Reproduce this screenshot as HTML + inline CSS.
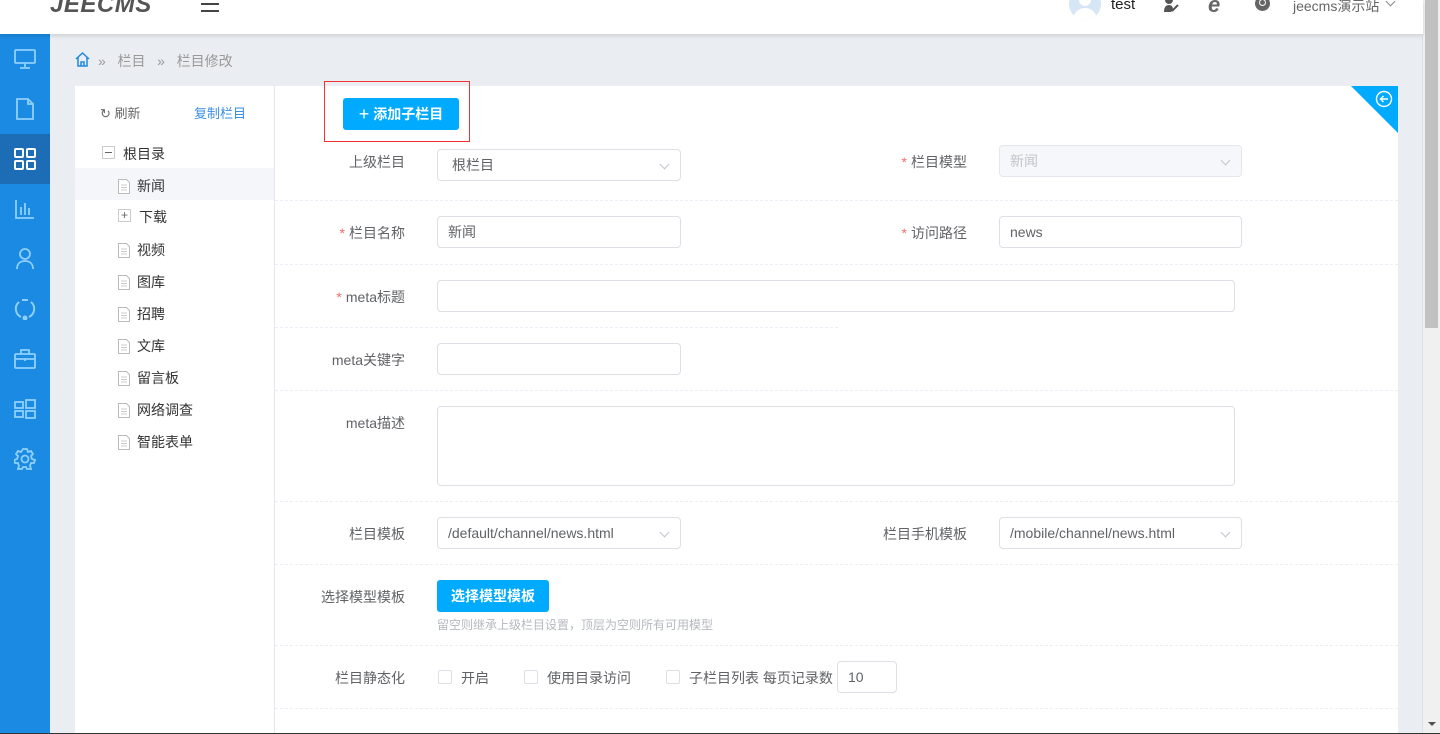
<!DOCTYPE html>
<html><head><meta charset="utf-8"><style>
*{box-sizing:border-box;margin:0;padding:0}
body{width:1440px;height:734px;overflow:hidden;background:#eaedf1;font-family:"Liberation Sans","Noto Sans CJK SC",sans-serif;font-size:14px;color:#606266;position:relative}
.a{position:absolute}
.hdr{left:0;top:0;width:1423px;height:34px;background:#fff;box-shadow:0 2px 4px rgba(0,0,0,.12);z-index:2}
.side{left:0;top:34px;width:50px;height:700px;background:#1a8ae2}
.si{position:absolute;left:0;width:50px;height:50px;display:flex;align-items:center;justify-content:center}
.panel{left:75px;top:86px;width:1323px;height:648px;background:#fff}
.tree{left:75px;top:86px;width:200px;height:648px;border-right:1px solid #e4e7ed}
.lbl{position:absolute;width:130px;left:275px;text-align:right;color:#606266}
.st{color:#f56c6c;margin-right:4px}
.inp{position:absolute;height:32px;border:1px solid #dcdfe6;border-radius:4px;background:#fff;padding-left:10px;line-height:30px;color:#606266}
.sep{position:absolute;left:275px;width:1123px;border-top:1px dashed #ebeef5;height:0}
.arr{position:absolute;right:12px;top:11px;width:7px;height:7px;border-right:1px solid #c0c4cc;border-bottom:1px solid #c0c4cc;transform:rotate(45deg)}
.ti{position:absolute;left:118px;display:flex;align-items:center;color:#333}
.doc{width:12px;height:15px;margin-right:7px}
.cb{position:absolute;width:14px;height:14px;border:1px solid #dcdfe6;border-radius:2px;background:#fff}
</style></head><body>
<svg width="0" height="0" style="position:absolute"><symbol id="d" viewBox="0 0 12 15"><path d="M.5.5h8l3 3v11h-11z" fill="#fff" stroke="#bbb"/><path d="M3 6h6M3 8.5h6M3 11h6" stroke="#ccc"/></symbol></svg>
<div class="a hdr">
 <div class="a" style="left:50px;top:-9px;font-size:24px;font-weight:bold;font-style:italic;color:#555;letter-spacing:0.5px">JEECMS</div>
 <div class="a" style="left:201px;top:3px;width:18px;height:2px;background:#444;box-shadow:0 7px 0 #444"></div>
 <div class="a" style="left:1069px;top:-12px;width:32px;height:32px;border-radius:50%;background:#d6e6f4;overflow:hidden"><div class="a" style="left:10px;top:6px;width:12px;height:12px;border-radius:50%;background:#fff"></div><div class="a" style="left:4px;top:20px;width:24px;height:16px;border-radius:12px 12px 0 0;background:#fff"></div></div>
 <div class="a" style="left:1111px;top:-4px;font-size:15px;color:#222">test</div>
 <svg class="a" style="left:1163px;top:-2px" width="17" height="16"><circle cx="6" cy="2" r="4" fill="#555"/><path d="M1 14c0-5 2-7 5-7s4 2 4 5l-2 2z" fill="#555"/><path d="M9 13l6-6" stroke="#555" stroke-width="2"/></svg>
 <div class="a" style="left:1208px;top:-8px;font-size:22px;font-style:italic;font-weight:bold;color:#666">e</div>
 <div class="a" style="left:1255px;top:-4px;width:15px;height:15px;border-radius:50%;background:#666"><div class="a" style="left:4px;top:3px;width:7px;height:7px;border:1.5px solid #fff;border-radius:50%"></div></div>
 <div class="a" style="left:1293px;top:-4px;font-size:14px;color:#666">jeecms演示站</div>
 <div class="a" style="left:1387px;top:-2px;width:7px;height:7px;border-right:1px solid #888;border-bottom:1px solid #888;transform:rotate(45deg)"></div>
</div>
<div class="a side">
 <div class="si" style="top:0"><svg width="22" height="20" fill="none" stroke="#8fd0ff" stroke-width="1.8"><rect x="1" y="1" width="20" height="13" rx="1"/><path d="M11 14v4M6 19h10"/></svg></div>
 <div class="si" style="top:50px"><svg width="18" height="22" fill="none" stroke="#8fd0ff" stroke-width="1.8"><path d="M1 1h11l5 5v15H1z M12 1v5h5"/></svg></div>
 <div class="si" style="top:100px;background:#1d6db6"><svg width="22" height="22" fill="none" stroke="#fff" stroke-width="2"><rect x="1" y="1" width="8" height="8" rx="1"/><rect x="13" y="1" width="8" height="8" rx="1"/><rect x="1" y="13" width="8" height="8" rx="1"/><rect x="13" y="13" width="8" height="8" rx="1"/></svg></div>
 <div class="si" style="top:150px"><svg width="20" height="20" fill="none" stroke="#8fd0ff" stroke-width="1.8"><path d="M1 1v18h18M6 16V8M10 16V4M14 16V9"/></svg></div>
 <div class="si" style="top:200px"><svg width="18" height="22" fill="none" stroke="#8fd0ff" stroke-width="1.8"><circle cx="9" cy="6" r="5"/><path d="M1 21c0-5 3-8 8-8s8 3 8 8"/></svg></div>
 <div class="si" style="top:250px"><svg width="22" height="22" fill="none" stroke="#8fd0ff" stroke-width="2"><path d="M5 4a9 9 0 0 0 2 15M15 19a9 9 0 0 0 2-15M8 2h6"/><circle cx="11" cy="20" r="1.5" fill="#8fd0ff"/></svg></div>
 <div class="si" style="top:300px"><svg width="22" height="20" fill="none" stroke="#8fd0ff" stroke-width="1.8"><rect x="1" y="5" width="20" height="14" rx="1"/><path d="M7 5V1h8v4M1 10h20M11 9v3"/></svg></div>
 <div class="si" style="top:350px"><svg width="22" height="20" fill="none" stroke="#8fd0ff" stroke-width="1.8"><rect x="1" y="3" width="8" height="6"/><rect x="1" y="12" width="8" height="6"/><rect x="12" y="1" width="9" height="8"/><rect x="12" y="12" width="9" height="7"/></svg></div>
 <div class="si" style="top:400px"><svg width="22" height="22" fill="none" stroke="#8fd0ff" stroke-width="1.8"><circle cx="11" cy="11" r="3.5"/><path d="M9 1h4l1 3 3-1 2 3-2 2 1 3 3 1v0l-1 3-3 0-1 3 1 3-4 0-1-2h-3l-1 2-4 0 1-3-1-3-3 0-1-3 3-1 1-3-2-2 2-3 3 1z"/></svg></div>
</div>
<div class="a" style="left:75px;top:52px"><svg width="15" height="15" fill="none" stroke="#1a8ae2" stroke-width="1.5"><path d="M1 7L7.5 1 14 7M3 5.5V14h9V5.5M6 14v-4h3v4"/></svg></div>
<div class="a" style="left:98px;top:51px;color:#999;font-size:14px">»&nbsp;&nbsp;&nbsp;栏目&nbsp;&nbsp;&nbsp;»&nbsp;&nbsp;&nbsp;栏目修改</div>
<div class="a panel"></div>
<div class="a tree"></div>
<div class="a" style="left:100px;top:103px;color:#666;font-size:13px">↻ 刷新</div>
<div class="a" style="left:194px;top:103px;color:#3a8ee6;font-size:13px">复制栏目</div>
<div class="a" style="left:102px;top:146px;width:13px;height:13px;border:1px solid #ccc"><div class="a" style="left:2px;top:5px;width:7px;height:1px;background:#666"></div></div>
<div class="a" style="left:123px;top:144px;color:#333">根目录</div>
<div class="a" style="left:75px;top:168px;width:199px;height:32px;background:#f5f6f9"></div>
<div class="ti" style="top:176px"><svg class="doc"><use href="#d"/></svg>新闻</div>
<div class="a" style="left:118px;top:209px;width:13px;height:13px;border:1px solid #ccc;font-size:12px;line-height:10px;text-align:center;color:#666">+</div>
<div class="a" style="left:139px;top:207px;color:#333">下载</div>
<div class="ti" style="top:240px"><svg class="doc"><use href="#d"/></svg>视频</div>
<div class="ti" style="top:272px"><svg class="doc"><use href="#d"/></svg>图库</div>
<div class="ti" style="top:304px"><svg class="doc"><use href="#d"/></svg>招聘</div>
<div class="ti" style="top:336px"><svg class="doc"><use href="#d"/></svg>文库</div>
<div class="ti" style="top:368px"><svg class="doc"><use href="#d"/></svg>留言板</div>
<div class="ti" style="top:400px"><svg class="doc"><use href="#d"/></svg>网络调查</div>
<div class="ti" style="top:432px"><svg class="doc"><use href="#d"/></svg>智能表单</div>
<div class="a" style="left:1351px;top:86px;width:0;height:0;border-top:47px solid #00aaff;border-left:47px solid transparent"></div>
<svg class="a" style="left:1375px;top:90px" width="18" height="18" fill="none" stroke="#fff" stroke-width="1.4"><circle cx="9" cy="9" r="7.5"/><path d="M13 9H5.5M8.5 6l-3 3 3 3"/></svg>
<div class="a" style="left:324px;top:81px;width:146px;height:61px;border:1px solid #e33"></div>
<div class="a" style="left:343px;top:98px;width:116px;height:32px;background:#00aaff;border-radius:3px;color:#fff;font-size:14px;line-height:32px;text-align:center;font-weight:bold"><span style="font-size:18px;vertical-align:-1px;font-weight:normal">+</span> 添加子栏目</div>
<div class="lbl" style="top:152px">上级栏目</div>
<div class="inp" style="left:437px;top:149px;width:244px;padding-left:14px">根栏目<div class="arr"></div></div>
<div class="lbl" style="left:837px;top:152px"><span class="st">*</span>栏目模型</div>
<div class="inp" style="left:999px;top:145px;width:243px;background:#f5f7fa;border-color:#e4e7ed;color:#c0c4cc">新闻<div class="arr"></div></div>
<div class="sep" style="top:200px"></div>
<div class="lbl" style="top:223px"><span class="st">*</span>栏目名称</div>
<div class="inp" style="left:437px;top:216px;width:244px">新闻</div>
<div class="lbl" style="left:837px;top:223px"><span class="st">*</span>访问路径</div>
<div class="inp" style="left:999px;top:216px;width:243px">news</div>
<div class="sep" style="top:264px"></div>
<div class="lbl" style="top:287px"><span class="st">*</span>meta标题</div>
<div class="inp" style="left:437px;top:280px;width:798px"></div>
<div class="sep" style="top:327px;width:563px"></div>
<div class="lbl" style="top:350px">meta关键字</div>
<div class="inp" style="left:437px;top:343px;width:244px"></div>
<div class="sep" style="top:390px"></div>
<div class="lbl" style="top:413px">meta描述</div>
<div class="inp" style="left:437px;top:406px;width:798px;height:80px"></div>
<div class="sep" style="top:501px"></div>
<div class="lbl" style="top:524px">栏目模板</div>
<div class="inp" style="left:437px;top:517px;width:244px">/default/channel/news.html<div class="arr"></div></div>
<div class="lbl" style="left:837px;top:524px">栏目手机模板</div>
<div class="inp" style="left:999px;top:517px;width:243px">/mobile/channel/news.html<div class="arr"></div></div>
<div class="sep" style="top:564px"></div>
<div class="lbl" style="top:587px">选择模型模板</div>
<div class="a" style="left:437px;top:580px;width:112px;height:32px;background:#00aaff;border-radius:3px;color:#fff;line-height:32px;text-align:center;font-weight:bold">选择模型模板</div>
<div class="a" style="left:437px;top:616px;font-size:12px;color:#b5b9bf">留空则继承上级栏目设置，顶层为空则所有可用模型</div>
<div class="sep" style="top:645px"></div>
<div class="lbl" style="top:668px">栏目静态化</div>
<div class="cb" style="left:438px;top:670px"></div><div class="a" style="left:461px;top:668px">开启</div>
<div class="cb" style="left:524px;top:670px"></div><div class="a" style="left:547px;top:668px">使用目录访问</div>
<div class="cb" style="left:666px;top:670px"></div><div class="a" style="left:689px;top:668px">子栏目列表 每页记录数</div>
<div class="inp" style="left:837px;top:661px;width:60px">10</div>
<div class="sep" style="top:708px"></div>
<div class="a" style="left:1422px;top:34px;width:1px;height:700px;background:#dcdfe6"></div>
<div class="a" style="left:1423px;top:0;width:17px;height:734px;background:#f0f0f0"></div>
<div class="a" style="left:1425px;top:0;width:13px;height:328px;background:#c1c1c1"></div>
<div class="a" style="left:1428px;top:722px;width:0;height:0;border-left:4px solid transparent;border-right:4px solid transparent;border-top:4px solid #505050"></div>
<div class="a" style="left:0;top:733px;width:1440px;height:1px;background:#333"></div>
</body></html>
